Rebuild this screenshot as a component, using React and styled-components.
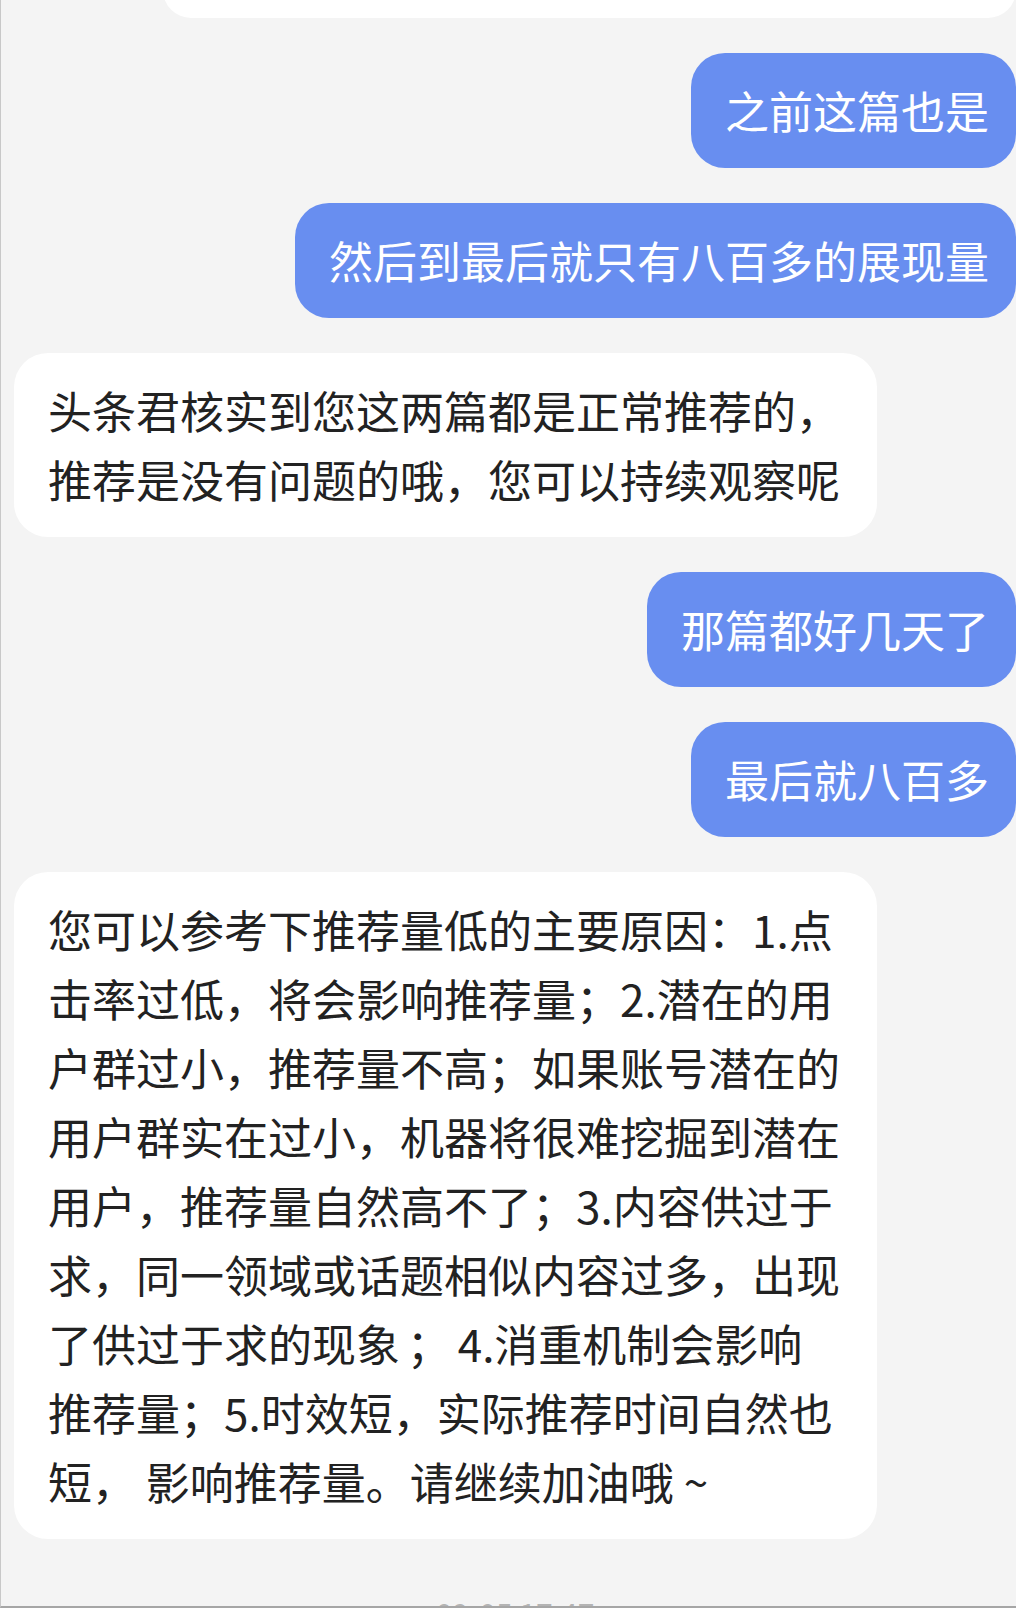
import React from 'react';
import styled, { createGlobalStyle } from 'styled-components';

const GlobalStyle = createGlobalStyle`
  html, body {
    margin: 0;
    padding: 0;
    background: #f4f4f4;
  }
  * {
    box-sizing: border-box;
  }
`;

const Screen = styled.div`
  width: 1016px;
  height: 1608px;
  overflow: hidden;
  background: #f4f4f4;
  border-left: 1px solid #c8c8c8;
  border-bottom: 2px solid #a6a6a6;
  font-family: 'Noto Sans CJK SC', 'Noto Sans', sans-serif;
`;

const Thread = styled.div`
  display: flex;
  flex-direction: column;
  gap: 35px;
  padding: 0 0 0 13px;
`;

// tail of the previous card, scrolled mostly out of view
const CardTail = styled.div`
  align-self: flex-end;
  width: 853px;
  height: 90px;
  margin-top: -72px;
  background: #ffffff;
  border-radius: 28px;
`;

const Bubble = styled.div`
  align-self: ${(p) => (p.$mine ? 'flex-end' : 'flex-start')};
  background: ${(p) => (p.$mine ? '#688ef0' : '#ffffff')};
  color: ${(p) => (p.$mine ? '#ffffff' : '#222222')};
  padding: ${(p) => (p.$mine ? '23px 27px 23px 34px' : '23px 37px 23px 34px')};
  border-radius: 34px;
  font-size: 44px;
  line-height: 69px;
`;

const Line = styled.div`
  white-space: pre;
  word-spacing: ${(p) => (p.$tight ? '-3px' : 'normal')};
`;

const Timestamp = styled.div`
  margin-top: 24px;
  text-align: center;
  font-size: 30px;
  line-height: 30px;
  color: #b4b4b4;
`;

const messages = [
  { mine: true, lines: ['之前这篇也是'] },
  { mine: true, lines: ['然后到最后就只有八百多的展现量'] },
  {
    mine: false,
    lines: ['头条君核实到您这两篇都是正常推荐的，', '推荐是没有问题的哦，您可以持续观察呢'],
  },
  { mine: true, lines: ['那篇都好几天了'] },
  { mine: true, lines: ['最后就八百多'] },
  {
    mine: false,
    lines: [
      '您可以参考下推荐量低的主要原因：1.点',
      '击率过低，将会影响推荐量；2.潜在的用',
      '户群过小，推荐量不高；如果账号潜在的',
      '用户群实在过小，机器将很难挖掘到潜在',
      '用户，推荐量自然高不了；3.内容供过于',
      '求，同一领域或话题相似内容过多，出现',
      '了供过于求的现象 ； 4.消重机制会影响',
      '推荐量；5.时效短，实际推荐时间自然也',
      '短， 影响推荐量。请继续加油哦 ~',
    ],
  },
];

export default function App() {
  return (
    <>
      <GlobalStyle />
      <Screen>
        <Thread>
          <CardTail />
          {messages.map((m, i) => (
            <Bubble key={i} $mine={m.mine}>
              {m.lines.map((l, j) => (
                <Line key={j} $tight={l.includes(' ；')}>
                  {l}
                </Line>
              ))}
            </Bubble>
          ))}
          <Timestamp>09-05 17:47</Timestamp>
        </Thread>
      </Screen>
    </>
  );
}
